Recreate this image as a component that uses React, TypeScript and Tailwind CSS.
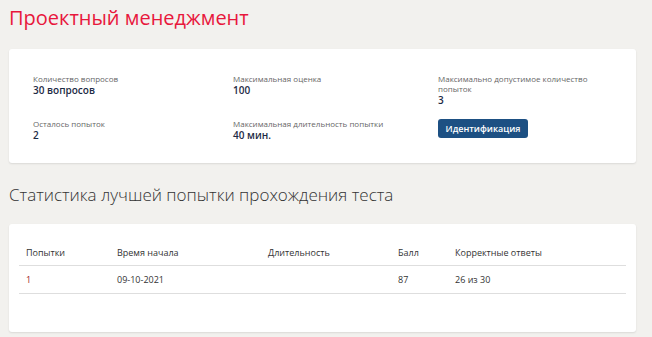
import React from 'react';

const attempts = [
  { n: '1', start: '09-10-2021', duration: '', score: '87', correct: '26 из 30' },
];

const Field: React.FC<{ label: string; value: string; className?: string }> = ({ label, value, className }) => (
  <div className={className}>
    <div className="text-[8px] leading-[10px] text-[#666]">{label}</div>
    <div className="text-[10px] leading-[12px] font-semibold text-[#1d2b45]">{value}</div>
  </div>
);

const App: React.FC = () => {
  return (
    <div className="min-h-[337px] bg-[#f2f1ee] pb-[6px]" style={{ fontFamily: '"Open Sans", "Liberation Sans", sans-serif' }}>
      <h1 className="pt-[6px] pl-[9px] text-[20px] leading-[24px] text-[#e8173c]">Проектный менеджмент</h1>

      <div className="ml-[9px] mt-[19px] w-[627px] rounded-[3px] bg-white pt-[25px] pb-[22px] pl-[24px] shadow-[0_1px_2px_rgba(0,0,0,0.1)]">
        <div className="flex items-start">
          <Field className="w-[200px]" label="Количество вопросов" value="30 вопросов" />
          <Field className="w-[205px]" label="Максимальная оценка" value="100" />
          <Field className="w-[150px]" label="Максимально допустимое количество попыток" value="3" />
        </div>
        <div className="mt-[13px] flex items-start">
          <Field className="w-[200px]" label="Осталось попыток" value="2" />
          <Field className="w-[205px]" label="Максимальная длительность попытки" value="40 мин." />
          <button className="flex h-[19px] w-[90px] items-center justify-center rounded-[3px] bg-[#1d5083] text-[9px] font-semibold text-white">
            Идентификация
          </button>
        </div>
      </div>

      <h2 className="mt-[22px] pl-[9px] text-[17px] leading-[20px] font-light text-[#333]">
        Статистика лучшей попытки прохождения теста
      </h2>

      <div className="ml-[9px] mt-[19px] w-[627px] rounded-[3px] bg-white px-[10px] pt-[17px] pb-[38px] shadow-[0_1px_2px_rgba(0,0,0,0.1)]">
        <div className="grid h-[25px] grid-cols-[91px_151px_130px_57px_1fr] items-center border-b border-[#dedede] text-[9px] font-medium text-[#333]">
          <div className="pl-[7px]">Попытки</div>
          <div className="pl-[7px]">Время начала</div>
          <div className="pl-[7px]">Длительность</div>
          <div className="pl-[7px]">Балл</div>
          <div className="pl-[7px]">Корректные ответы</div>
        </div>
        {attempts.map((a) => (
          <div key={a.n} className="grid h-[28px] grid-cols-[91px_151px_130px_57px_1fr] items-center border-b border-[#dedede] text-[9px] text-[#333]">
            <div className="pl-[7px] text-[#9b1c1c]">{a.n}</div>
            <div className="pl-[7px]">{a.start}</div>
            <div className="pl-[7px]">{a.duration}</div>
            <div className="pl-[7px]">{a.score}</div>
            <div className="pl-[7px]">{a.correct}</div>
          </div>
        ))}
      </div>
    </div>
  );
};

export default App;
